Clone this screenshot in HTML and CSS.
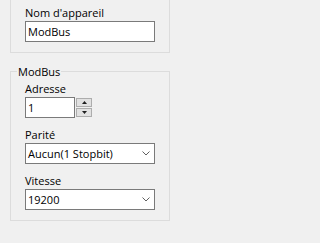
FILE: index.html
```html
<!DOCTYPE html>
<html>
<head>
<meta charset="utf-8">
<link rel="stylesheet" href="styles.css">
</head>
<body>
<div class="panel">
  <fieldset class="group group-top">
    <div class="field">
      <label class="lbl">Nom d'appareil</label>
      <div class="box">ModBus</div>
    </div>
  </fieldset>
  <fieldset class="group">
    <legend>ModBus</legend>
    <div class="field">
      <label class="lbl">Adresse</label>
      <div class="spin">
        <div class="box short">1</div>
        <div class="spin-btns">
          <div class="sb"><svg width="5" height="3" viewBox="0 0 5 3"><path d="M2.5 0 L5 3 L0 3 Z" fill="#1e1e1e"/></svg></div>
          <div class="sb"><svg width="5" height="3" viewBox="0 0 5 3"><path d="M0 0 L5 0 L2.5 3 Z" fill="#1e1e1e"/></svg></div>
        </div>
      </div>
    </div>
    <div class="field">
      <label class="lbl">Parité</label>
      <div class="box combo"><span>Aucun(1 Stopbit)</span><svg class="chev" width="8" height="5" viewBox="0 0 8 5"><path d="M0.5 0.5 L4 4 L7.5 0.5" fill="none" stroke="#606060" stroke-width="1"/></svg></div>
    </div>
    <div class="field">
      <label class="lbl">Vitesse</label>
      <div class="box combo"><span>19200</span><svg class="chev" width="8" height="5" viewBox="0 0 8 5"><path d="M0.5 0.5 L4 4 L7.5 0.5" fill="none" stroke="#606060" stroke-width="1"/></svg></div>
    </div>
  </fieldset>
</div>
</body>
</html>
```
FILE: styles.css
```css
html, body {
  margin: 0;
  padding: 0;
  background: #f0f0f0;
}
body {
  font-family: "Open Sans", "Liberation Sans", Arial, sans-serif;
  font-size: 11px;
  color: #000;
}
.panel {
  padding-left: 10px;
  width: 160px;
}
.group {
  box-sizing: border-box;
  width: 160px;
  margin: 12px 0 0 0;
  min-width: 0;
  border: 1px solid #dcdcdc;
  padding: 4px 14px 10px 14px;
}
.group-top {
  margin-top: 0;
  border-top: none;
  padding-top: 6px;
}
.group legend {
  margin-left: -8px;
  padding: 0 1px;
  line-height: 13px;
  font-size: 11px;
}
.field + .field {
  margin-top: 10px;
}
.lbl {
  display: block;
  height: 13px;
  line-height: 13px;
  margin-bottom: 2px;
}
.box {
  box-sizing: border-box;
  height: 21px;
  border: 1px solid #7a7a7a;
  background: #fff;
  padding-left: 2px;
  line-height: 19px;
  white-space: nowrap;
}
.spin {
  display: flex;
  gap: 1px;
}
.short {
  width: 50px;
}
.spin-btns {
  display: flex;
  flex-direction: column;
  gap: 1px;
  padding-top: 1px;
}
.sb {
  box-sizing: border-box;
  width: 16px;
  height: 9px;
  border: 1px solid #adadad;
  background: #e1e1e1;
  display: flex;
  align-items: center;
  justify-content: center;
}
.sb svg {
  display: block;
}
.combo {
  display: flex;
  align-items: center;
  justify-content: space-between;
  padding-right: 4px;
}
.chev {
  display: block;
}
```
